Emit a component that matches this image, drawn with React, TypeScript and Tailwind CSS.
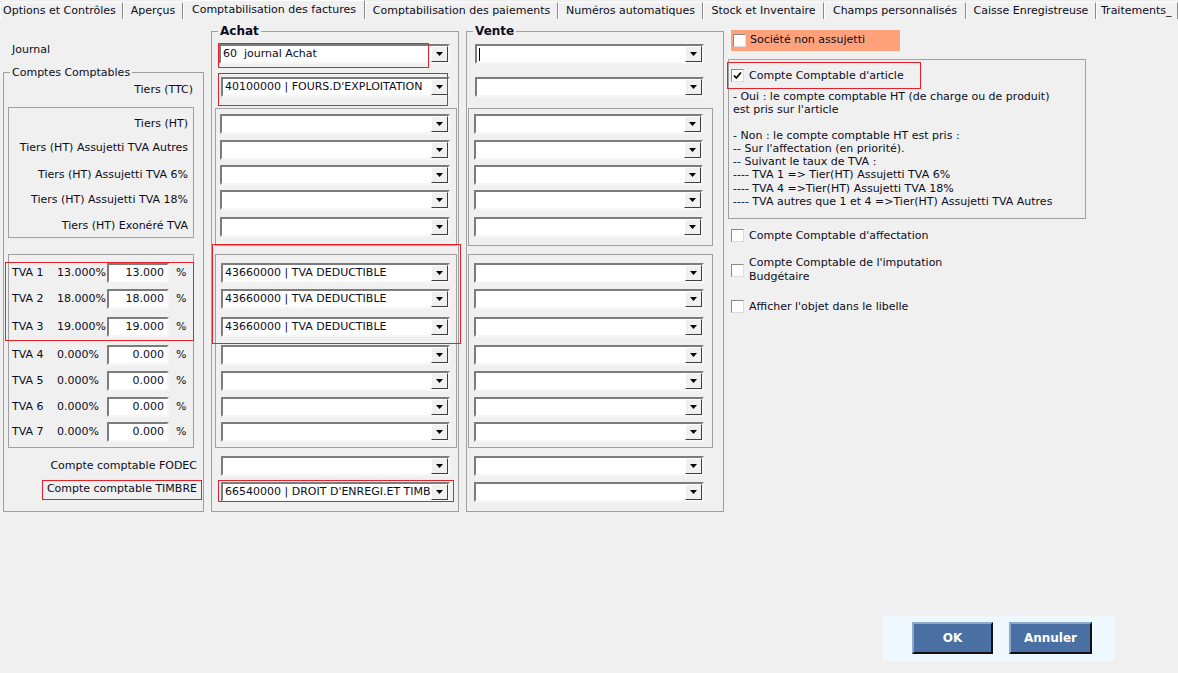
import React from "react";

const tabs = [
  { label: "Options et Contrôles", w: "w-[123px] justify-start pl-[2px]" },
  { label: "Aperçus", w: "w-[60px] justify-center" },
  { label: "Comptabilisation des factures", w: "w-[182px]", active: true },
  { label: "Comptabilisation des paiements", w: "w-[193px] justify-center" },
  { label: "Numéros automatiques", w: "w-[145px] justify-center" },
  { label: "Stock et Inventaire", w: "w-[121px] justify-center" },
  { label: "Champs personnalisés", w: "w-[142px] justify-center" },
  { label: "Caisse Enregistreuse", w: "w-[130px] justify-center" },
  { label: "Traitements_", w: "w-[82px] justify-start pl-[4px]" },
];

function Tri() {
  return (
    <svg width="7" height="4" viewBox="0 0 7 4">
      <path d="M0 0h7L3.5 4z" fill="#000" />
    </svg>
  );
}

function Combo({ value = "", className = "", cursor = false }: { value?: string; className?: string; cursor?: boolean }) {
  return (
    <div
      className={`flex h-[20px] shrink-0 border-2 border-t-[#7c7c7c] border-l-[#7c7c7c] border-b-[#f6f6f6] border-r-[#f6f6f6] bg-white ${className}`}
    >
      <div className="min-w-0 flex-1 overflow-hidden whitespace-pre pl-[2px] leading-[16px]">
        {cursor && <span className="inline-block h-[13px] w-px bg-black align-middle" />}
        {value}
      </div>
      <div className="flex h-full w-[17px] shrink-0 items-center justify-center border border-t-white border-l-white border-b-[#404040] border-r-[#404040] bg-[#f0f0f0]">
        <Tri />
      </div>
    </div>
  );
}

function Check({ checked = false }: { checked?: boolean }) {
  return (
    <div className="flex h-[13px] w-[13px] shrink-0 items-center justify-center border border-t-[#8a8a8a] border-l-[#8a8a8a] border-b-[#dcdcdc] border-r-[#dcdcdc] bg-white">
      {checked && (
        <svg width="9" height="9" viewBox="0 0 9 9">
          <path d="M1 4.5l2.3 2.5L8 1.5" stroke="#000" strokeWidth="1.8" fill="none" />
        </svg>
      )}
    </div>
  );
}

function RedBox({ className }: { className: string }) {
  return <div className={`pointer-events-none absolute border border-[#e8202a] ${className}`} />;
}

const tvaRows = [
  { n: 1, p: "13.000%", v: "13.000", mt: "mt-[8px]" },
  { n: 2, p: "18.000%", v: "18.000", mt: "mt-[6px]" },
  { n: 3, p: "19.000%", v: "19.000", mt: "mt-[8px]" },
  { n: 4, p: "0.000%", v: "0.000", mt: "mt-[8px]" },
  { n: 5, p: "0.000%", v: "0.000", mt: "mt-[6px]" },
  { n: 6, p: "0.000%", v: "0.000", mt: "mt-[6px]" },
  { n: 7, p: "0.000%", v: "0.000", mt: "mt-[5px]" },
];

const box1Gaps = ["mt-[5px]", "mt-[6px]", "mt-[5px]", "mt-[5px]", "mt-[7px]"];
const box2Gaps = ["mt-[8px]", "mt-[6px]", "mt-[8px]", "mt-[8px]", "mt-[6px]", "mt-[6px]", "mt-[5px]"];
const deductible = "43660000 | TVA DEDUCTIBLE";

export default function App() {
  return (
    <div className="relative h-[673px] w-[1178px] overflow-hidden bg-[#f0f0f0] font-['DejaVu_Sans',sans-serif] text-[11px] text-[#0c0c20]">
      {/* tab strip */}
      <div className="flex h-[19px] items-start">
        {tabs.map((t) =>
          t.active ? (
            <div
              key={t.label}
              className={`${t.w} flex h-[19px] shrink-0 items-start justify-center whitespace-nowrap border-l border-t border-r border-l-white border-t-white border-r-[#8a8a8a] bg-[#f0f0f0] pt-[1px]`}
            >
              {t.label}
            </div>
          ) : (
            <div
              key={t.label}
              className={`${t.w} mt-[2px] flex h-[17px] shrink-0 items-center overflow-hidden whitespace-nowrap border-l border-t border-r border-l-white border-t-white border-r-[#8a8a8a]`}
            >
              {t.label}
            </div>
          )
        )}
      </div>

      <div className="flex items-start pt-[6px]">
        {/* left column */}
        <div className="ml-[3px] flex w-[201px] shrink-0 flex-col">
          <div className="ml-[9px] mt-[18px] leading-[13px]">Journal</div>
          <fieldset className="mt-[10px] h-[446px] border border-[#a0a0a0]">
            <legend className="ml-[6px] px-[2px] leading-[13px]">Comptes Comptables</legend>
            <div className="mt-[4px] pr-[10px] text-right leading-[13px]">Tiers (TTC)</div>
            <div className="ml-[4px] mt-[11px] h-[131px] w-[186px] border border-[#a0a0a0] pr-[5px] text-right">
              <div className="mt-[9px] leading-[13px]">Tiers (HT)</div>
              <div className="mt-[11px] whitespace-nowrap leading-[13px]">Tiers (HT) Assujetti TVA Autres</div>
              <div className="mt-[14px] leading-[13px]">Tiers (HT) Assujetti TVA 6%</div>
              <div className="mt-[12px] leading-[13px]">Tiers (HT) Assujetti TVA 18%</div>
              <div className="mt-[13px] leading-[13px]">Tiers (HT) Exonéré TVA</div>
            </div>
            <div className="relative ml-[4px] mt-[16px] h-[194px] w-[186px] border border-[#a0a0a0]">
              {tvaRows.map((r) => (
                <div key={r.n} className={`${r.mt} flex h-[20px] items-center pl-[3px]`}>
                  <div className="w-[45px] shrink-0">TVA {r.n}</div>
                  <div className="w-[50px] shrink-0 whitespace-nowrap">{r.p}</div>
                  <div className="h-[20px] w-[62px] shrink-0 border-2 border-t-[#7c7c7c] border-l-[#7c7c7c] border-b-[#f6f6f6] border-r-[#f6f6f6] bg-white pr-[3px] text-right leading-[16px]">
                    {r.v}
                  </div>
                  <div className="ml-[7px]">%</div>
                </div>
              ))}
              <RedBox className="left-[-4px] top-[7px] h-[79px] w-[189px]" />
            </div>
            <div className="mt-[11px] whitespace-nowrap pr-[6px] text-right leading-[13px]">Compte comptable FODEC</div>
            <div className="mt-[8px] flex justify-end pr-[1px]">
              <div className="h-[20px] whitespace-nowrap border border-[#e8202a] px-[4px] leading-[16px]">Compte comptable TIMBRE</div>
            </div>
          </fieldset>
        </div>

        {/* Achat */}
        <fieldset className="ml-[7px] h-[487px] w-[248px] shrink-0 border border-[#a0a0a0]">
          <legend className="ml-[6px] px-[2px] text-[12px] font-bold leading-[13px]">Achat</legend>
          <div className="relative ml-[7px] mt-[6px] w-[231px]">
            <Combo value="60  journal Achat" />
            <RedBox className="left-[-1px] top-[-1px] h-[25px] w-[211px]" />
          </div>
          <div className="relative ml-[9px] mt-[13px] w-[229px]">
            <Combo value="40100000 | FOURS.D'EXPLOITATION" />
            <RedBox className="left-[-3px] top-[-4px] h-[33px] w-[230px]" />
          </div>
          <div className="ml-[3px] mt-[11px] flex h-[138px] w-[242px] flex-col border border-[#a0a0a0]">
            {box1Gaps.map((g, i) => (
              <Combo key={i} className={`${g} ml-[4px] w-[230px]`} />
            ))}
          </div>
          <div className="relative ml-[3px] mt-[8px] flex h-[194px] w-[242px] flex-col border border-[#a0a0a0]">
            {box2Gaps.map((g, i) => (
              <Combo key={i} value={i < 3 ? deductible : ""} className={`${g} ml-[5px] w-[229px]`} />
            ))}
            <RedBox className="left-[-4px] top-[-11px] h-[100px] w-[249px]" />
          </div>
          <Combo className="ml-[9px] mt-[8px] w-[229px]" />
          <div className="relative ml-[9px] mt-[6px] w-[229px]">
            <Combo value="66540000 | DROIT D'ENREGI.ET TIMBRE" />
            <RedBox className="left-[-3px] top-[-2px] h-[22px] w-[236px]" />
          </div>
        </fieldset>

        {/* Vente */}
        <fieldset className="ml-[7px] h-[487px] w-[258px] shrink-0 border border-[#a0a0a0]">
          <legend className="ml-[6px] px-[2px] text-[12px] font-bold leading-[13px]">Vente</legend>
          <Combo cursor className="ml-[8px] mt-[6px] w-[229px]" />
          <Combo className="ml-[8px] mt-[13px] w-[229px]" />
          <div className="ml-[1px] mt-[11px] flex h-[138px] w-[245px] flex-col border border-[#a0a0a0]">
            {box1Gaps.map((g, i) => (
              <Combo key={i} className={`${g} ml-[5px] w-[229px]`} />
            ))}
          </div>
          <div className="ml-[1px] mt-[8px] flex h-[194px] w-[245px] flex-col border border-[#a0a0a0]">
            {box2Gaps.map((g, i) => (
              <Combo key={i} className={`${g} ml-[5px] w-[230px]`} />
            ))}
          </div>
          <Combo className="ml-[7px] mt-[8px] w-[230px]" />
          <Combo className="ml-[7px] mt-[6px] w-[230px]" />
        </fieldset>

        {/* right column */}
        <div className="ml-[4px] flex w-[358px] shrink-0 flex-col">
          <div className="ml-[3px] mt-[5px] flex h-[21px] w-[169px] items-center bg-[#ffa27c] pl-[2px]">
            <Check />
            <span className="ml-[4px] whitespace-nowrap">Société non assujetti</span>
          </div>
          <div className="relative mt-[8px] h-[160px] w-[358px] border border-[#a0a0a0]">
            <div className="ml-[2px] mt-[9px] flex items-center">
              <Check checked />
              <span className="ml-[5px] leading-[13px]">Compte Comptable d'article</span>
            </div>
            <div className="mt-[8px] whitespace-nowrap pl-[4px] leading-[13.1px]">
              <div>- Oui : le compte comptable HT (de charge ou de produit)</div>
              <div>est pris sur l'article</div>
              <div className="h-[13px]" />
              <div>- Non : le compte comptable HT est pris :</div>
              <div>-- Sur l'affectation (en priorité).</div>
              <div>-- Suivant le taux de TVA :</div>
              <div>---- TVA 1 =&gt; Tier(HT) Assujetti TVA 6%</div>
              <div>---- TVA 4 =&gt;Tier(HT) Assujetti TVA 18%</div>
              <div>---- TVA autres que 1 et 4 =&gt;Tier(HT) Assujetti TVA Autres</div>
            </div>
            <RedBox className="left-[-2px] top-[2px] h-[27px] w-[194px]" />
          </div>
          <div className="ml-[3px] mt-[10px] flex items-center">
            <Check />
            <span className="ml-[5px] leading-[13px]">Compte Comptable d'affectation</span>
          </div>
          <div className="ml-[3px] mt-[14px] flex items-center">
            <Check />
            <span className="ml-[5px] leading-[14px]">
              Compte Comptable de l'imputation
              <br />
              Budgétaire
            </span>
          </div>
          <div className="ml-[3px] mt-[16px] flex items-center">
            <Check />
            <span className="ml-[5px] leading-[13px]">Afficher l'objet dans le libelle</span>
          </div>
        </div>
      </div>

      {/* buttons */}
      <div className="mt-[104px] flex justify-end pr-[63px]">
        <div className="flex h-[45px] w-[232px] items-start gap-[16px] bg-[#f0f8ff] pl-[29px] pt-[6px]">
          <button className="h-[32px] w-[81px] border-2 border-t-[#8fa9cc] border-l-[#8fa9cc] border-b-[#101010] border-r-[#101010] bg-[#4a6fa3] text-[12px] font-bold text-white">
            OK
          </button>
          <button className="h-[32px] w-[83px] border-2 border-t-[#8fa9cc] border-l-[#8fa9cc] border-b-[#101010] border-r-[#101010] bg-[#4a6fa3] text-[12px] font-bold text-white">
            Annuler
          </button>
        </div>
      </div>
    </div>
  );
}
